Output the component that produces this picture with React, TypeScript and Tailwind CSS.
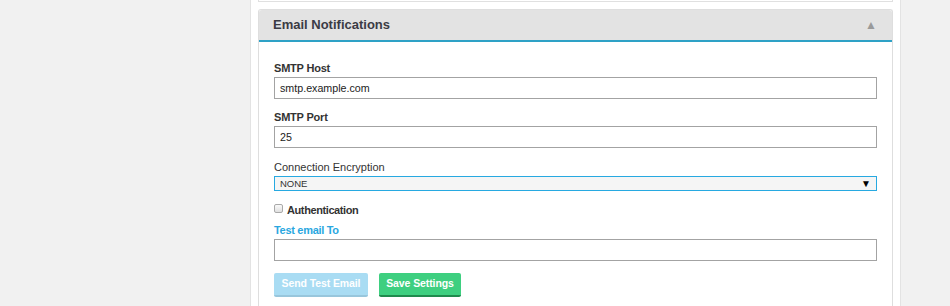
const font = { fontFamily: '"Liberation Sans", Arial, sans-serif' };

const Label = ({ children, className = "" }: { children: React.ReactNode; className?: string }) => (
  <div className={`text-[11px] leading-[14px] text-[#333] ${className}`}>{children}</div>
);

const TextInput = ({ value = "" }: { value?: string }) => (
  <div className="h-[22px] border border-[#a3a3a3] bg-white pl-[5px] flex items-center text-[10.7px] text-[#222]">
    {value}
  </div>
);

export default function App() {
  return (
    <div className="w-[950px] h-[306px] bg-[#f1f1f1] flex overflow-hidden" style={font}>
      <div className="w-[250px] shrink-0" />
      <div className="w-[651px] shrink-0 bg-white border-x border-[#e3e3e3] px-[7px]">
        {/* end of the panel above */}
        <div className="h-[2px] border-x border-b border-[#e0e0e0]" />

        <div className="mt-[7px] border-x border-t border-[#dedede] rounded-t-[3px]">
          <div className="h-[32px] bg-[#e3e3e3] border-b-2 border-[#2ea1c6] flex items-center justify-between pl-[14px] pr-[15px] rounded-t-[3px]">
            <span className="text-[13px] font-bold text-[#3b3b45] leading-none -mt-[1px]">Email Notifications</span>
            <span className="text-[12px] text-[#9a9a9a] leading-none -mt-[1px]">▲</span>
          </div>

          <div className="px-[15px] pt-[19px] pb-[20px]">
            <Label className="font-bold tracking-[-0.2px] mb-[2px]">SMTP Host</Label>
            <TextInput value="smtp.example.com" />

            <Label className="font-bold tracking-[-0.2px] mt-[11px] mb-[2px]">SMTP Port</Label>
            <TextInput value="25" />

            <Label className="mt-[12px] mb-[2px]">Connection Encryption</Label>
            <div className="h-[15px] border border-[#27a9e1] bg-[#f5f5f5] flex items-center justify-between pl-[5px] pr-[5px]">
              <span className="text-[9.5px] text-[#333] leading-none">NONE</span>
              <span className="text-[10px] text-black leading-none">▼</span>
            </div>

            <div className="mt-[12px] h-[14px] flex items-center">
              <span className="w-[9px] h-[9px] border border-[#a9a9a9] rounded-[2px] bg-gradient-to-b from-[#fafafa] to-[#e0e0e0] -mt-[3px]" />
              <span className="ml-[4px] text-[11px] font-bold tracking-[-0.4px] text-[#333] leading-[14px]">Authentication</span>
            </div>

            <Label className="font-bold tracking-[-0.3px] !text-[#2aa7df] mt-[6px] mb-[2px]">Test email To</Label>
            <TextInput />

            <div className="mt-[12px] flex gap-[11px]">
              <button className="h-[24px] w-[94px] rounded-[2px] bg-[#a9dcf3] border-b-2 border-[#98c6dc] text-white text-[10.5px] font-bold tracking-[-0.1px]">
                Send Test Email
              </button>
              <button className="h-[24px] w-[82px] rounded-[2px] bg-[#3ecf80] border-b-2 border-[#1f8a4d] text-white text-[10.5px] font-bold tracking-[-0.1px]">
                Save Settings
              </button>
            </div>
          </div>
        </div>
      </div>
    </div>
  );
}
